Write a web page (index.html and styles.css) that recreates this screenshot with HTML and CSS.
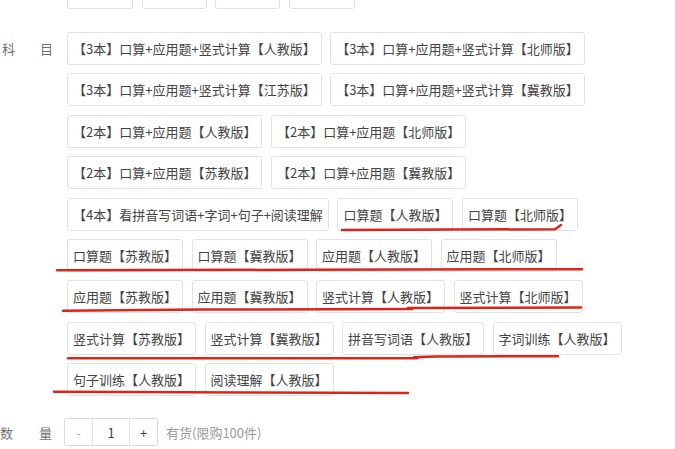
FILE: index.html
```html
<!DOCTYPE html>
<html lang="zh-CN">
<head>
<meta charset="utf-8">
<title>商品规格</title>
<link rel="stylesheet" href="styles.css">
</head>
<body>
<div class="page">
  <div class="group group-top">
    <div class="label"></div>
    <div class="options">
      <span class="opt opt-blank opt-w66"></span>
      <span class="opt opt-blank opt-w65"></span>
      <span class="opt opt-blank opt-w65"></span>
      <span class="opt opt-blank opt-w66"></span>
    </div>
  </div>

  <div class="group group-subject">
    <div class="label"><span>科</span><span>目</span></div>
    <div class="options">
      <span class="opt">【3本】口算+应用题+竖式计算【人教版】</span>
      <span class="opt">【3本】口算+应用题+竖式计算【北师版】</span>
      <span class="opt">【3本】口算+应用题+竖式计算【江苏版】</span>
      <span class="opt">【3本】口算+应用题+竖式计算【冀教版】</span>
      <span class="opt">【2本】口算+应用题【人教版】</span>
      <span class="opt">【2本】口算+应用题【北师版】</span>
      <span class="opt">【2本】口算+应用题【苏教版】</span>
      <span class="opt">【2本】口算+应用题【冀教版】</span>
      <span class="opt">【4本】看拼音写词语+字词+句子+阅读理解</span>
      <span class="opt">口算题【人教版】</span>
      <span class="opt">口算题【北师版】</span>
      <span class="opt">口算题【苏教版】</span>
      <span class="opt">口算题【冀教版】</span>
      <span class="opt">应用题【人教版】</span>
      <span class="opt">应用题【北师版】</span>
      <span class="opt">应用题【苏教版】</span>
      <span class="opt">应用题【冀教版】</span>
      <span class="opt">竖式计算【人教版】</span>
      <span class="opt">竖式计算【北师版】</span>
      <span class="opt">竖式计算【苏教版】</span>
      <span class="opt">竖式计算【冀教版】</span>
      <span class="opt">拼音写词语【人教版】</span>
      <span class="opt">字词训练【人教版】</span>
      <span class="opt">句子训练【人教版】</span>
      <span class="opt">阅读理解【人教版】</span>
    </div>
  </div>

  <div class="group group-qty">
    <div class="label label-qty"><span>数</span><span>量</span></div>
    <div class="stepper">
      <span class="step step-minus">-</span>
      <span class="step step-num">1</span>
      <span class="step step-plus">+</span>
    </div>
    <span class="stock">有货(限购100件)</span>
  </div>
</div>

<svg class="marks" width="675" height="449" viewBox="0 0 675 449" xmlns="http://www.w3.org/2000/svg">
  <g fill="none" stroke="#d9261c" stroke-width="2.5" stroke-linecap="round" stroke-linejoin="round">
    <polyline points="342,230 450,229.6 555,229.2 561,225"/>
    <polyline points="57,270.2 300,269.8 582,269.2"/>
    <polyline points="63,310.8 200,309.6 412,309"/>
    <polyline points="408,308 581,307.6"/>
    <polyline points="68,358.3 417,358.3"/>
    <polyline points="414,357.2 435,356.6 558,356.2"/>
    <polyline points="54,391.8 250,392.4 408,393"/>
  </g>
</svg>
</body>
</html>
```

FILE: styles.css
```css
html, body {
  margin: 0;
  padding: 0;
  background: #ffffff;
}

body {
  font-family: "Noto Sans CJK SC", "Noto Sans", sans-serif;
  font-size: 13px;
  color: #444444;
  width: 675px;
  height: 449px;
  overflow: hidden;
  position: relative;
}

.page {
  display: flex;
  flex-direction: column;
}

.group {
  display: flex;
  align-items: flex-start;
}

.group-top {
  margin-top: -24px;
}

.group-subject {
  margin-top: 23px;
}

.group-qty {
  margin-top: 22px;
  align-items: center;
}

.label {
  flex: none;
  width: 51px;
  height: 33px;
  margin-left: 2px;
  margin-right: 14px;
  display: flex;
  align-items: center;
  justify-content: space-between;
  color: #707070;
  font-size: 13px;
}

.label-qty {
  height: 28px;
  margin-left: 0;
  margin-right: 12px;
  width: 52px;
}

.options {
  display: flex;
  flex-wrap: wrap;
  gap: 8.4px 8.5px;
  width: 580px;
}

.opt {
  box-sizing: border-box;
  height: 33px;
  line-height: 31px;
  padding: 0 5px;
  border: 1px solid #e2e2e2;
  border-radius: 3px;
  background: #ffffff;
  color: #444444;
  font-size: 13px;
  white-space: nowrap;
}

.opt-blank {
  display: block;
}

.opt-w66 {
  width: 66px;
}

.opt-w65 {
  width: 65px;
}

.stepper {
  display: flex;
  box-sizing: border-box;
  height: 28px;
  border: 1px solid #dddddd;
  border-radius: 2px;
}

.step {
  display: flex;
  align-items: center;
  justify-content: center;
  font-size: 13px;
  color: #444444;
}

.step-minus {
  width: 27px;
  color: #aaaaaa;
  border-right: 1px solid #e2e2e2;
}

.step-num {
  width: 36px;
  border-right: 1px solid #e2e2e2;
}

.step-plus {
  width: 27px;
}

.stock {
  margin-left: 8px;
  color: #999999;
  font-size: 13px;
}

.marks {
  position: absolute;
  left: 0;
  top: 0;
  pointer-events: none;
}
```
